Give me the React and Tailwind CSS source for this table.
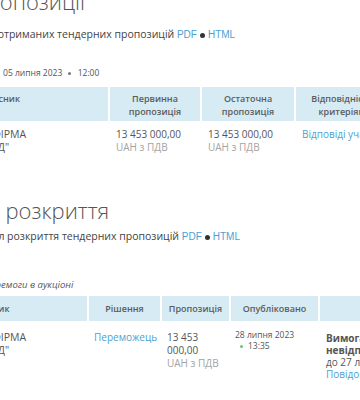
const Dot = ({ className = "bg-[#333] size-[5px] mx-[3px]" }) => (
  <span className={`inline-block rounded-full align-middle ${className}`} />
);

const Money = ({ value }) => (
  <div>
    <div>{value}</div>
    <div className="text-[#a3a3a3]">UAH з ПДВ</div>
  </div>
);

const Head = ({ children, className = "" }) => (
  <div className={`bg-[#d6ebf4] text-center text-[9px] leading-[13px] font-semibold text-[#5c5c5c] ${className}`}>
    {children}
  </div>
);

const Files = () => (
  <>
    <a className="font-['Liberation_Sans',sans-serif] text-[10px] text-[#4c9fd3]">PDF</a>
    <Dot />
    <a className="font-['Liberation_Sans',sans-serif] text-[10px] text-[#4c9fd3]">HTML</a>
  </>
);

const firm = 'ТОВ ВИРОБНИЧА ФІРМА "ПРОМЕНЕРГОЗАХІД"';

export default function App() {
  return (
    <div className="w-[360px] h-[400px] overflow-hidden bg-white font-['Open_Sans',sans-serif] text-[#555]">
      <div className="-ml-[106px] -mt-[12px] w-[620px]">
        {/* Offers */}
        <div className="pl-[61px]">
          <h2 className="pl-[16px] text-[22px] leading-[26px] font-light text-[#555]">Пропозиції</h2>
          <p className="mt-[12px] text-[10.5px] leading-[16px] text-[#444]">
            Перелік отриманих тендерних пропозицій <Files />
          </p>
          <p className="mt-[23px] pl-[4px] text-[8.5px] leading-[13px] text-[#555]">
            <span className="mr-[2px]">Створено</span> 05 липня 2023 <Dot className="bg-[#777] size-[3px] mx-[4px]" /> 12:00
          </p>
        </div>

        <div className="mt-[8px] grid grid-cols-[214px_90px_92px_110px] gap-x-[2px] text-[10px] leading-[13px]">
          <Head className="pt-[5px] pb-[3px]">Учасник</Head>
          <Head className="pt-[5px] pb-[3px]">Первинна<br />пропозиція</Head>
          <Head className="pt-[5px] pb-[3px]">Остаточна<br />пропозиція</Head>
          <Head className="pt-[5px] pb-[3px] w-[92px]">Відповідність<br />критеріям</Head>

          <div className="px-[7px] pt-[7px] pb-[8px] text-[10.5px]">{firm}</div>
          <div className="px-[6px] pt-[7px]"><Money value="13 453 000,00" /></div>
          <div className="px-[6px] pt-[7px]"><Money value="13 453 000,00" /></div>
          <div className="px-[6px] pt-[7px] whitespace-nowrap"><a className="text-[#4c9fd3]">Відповіді учасників</a></div>
        </div>

        {/* Opening */}
        <div className="pl-[61px] mt-[35px]">
          <h2 className="pl-[16px] text-[22px] leading-[26px] font-light text-[#555]">Хід розкриття</h2>
          <p className="mt-[5px] text-[10.5px] leading-[16px] text-[#444]">
            Протокол розкриття тендерних пропозицій <Files />
          </p>
          <p className="mt-[33px] text-[9.5px] leading-[13px] italic text-[#555]">Умови перемоги в аукціоні</p>
        </div>

        <div className="mt-[5px] grid grid-cols-[193px_71px_67px_87px_130px] gap-x-[2px] text-[10px] leading-[13px]">
          <Head className="py-[6px]">Учасник</Head>
          <Head className="py-[6px]">Рішення</Head>
          <Head className="py-[6px]">Пропозиція</Head>
          <Head className="py-[6px]">Опубліковано</Head>
          <Head className="py-[6px]">Вимоги</Head>

          <div className="px-[7px] pt-[10px] text-[10.5px]">{firm}</div>
          <div className="px-[5px] pt-[10px]"><a className="text-[#4c9fd3]">Переможець</a></div>
          <div className="px-[5px] pt-[10px]"><Money value="13 453 000,00" /></div>
          <div className="px-[4px] pt-[8px] text-[8.5px] leading-[11px]">
            <div>28 липня 2023</div>
            <div className="pl-[5px]">
              <Dot className="bg-[#6cc36c] size-[3px] mr-[5px]" />13:35
            </div>
          </div>
          <div className="px-[6px] pt-[11px] leading-[12px]">
            <div className="font-bold">Вимога про усунення невідповідностей</div>
            <div>до 27 липня 2023</div>
            <a className="text-[#4c9fd3]">Повідомлення</a>
          </div>
        </div>
      </div>
    </div>
  );
}
